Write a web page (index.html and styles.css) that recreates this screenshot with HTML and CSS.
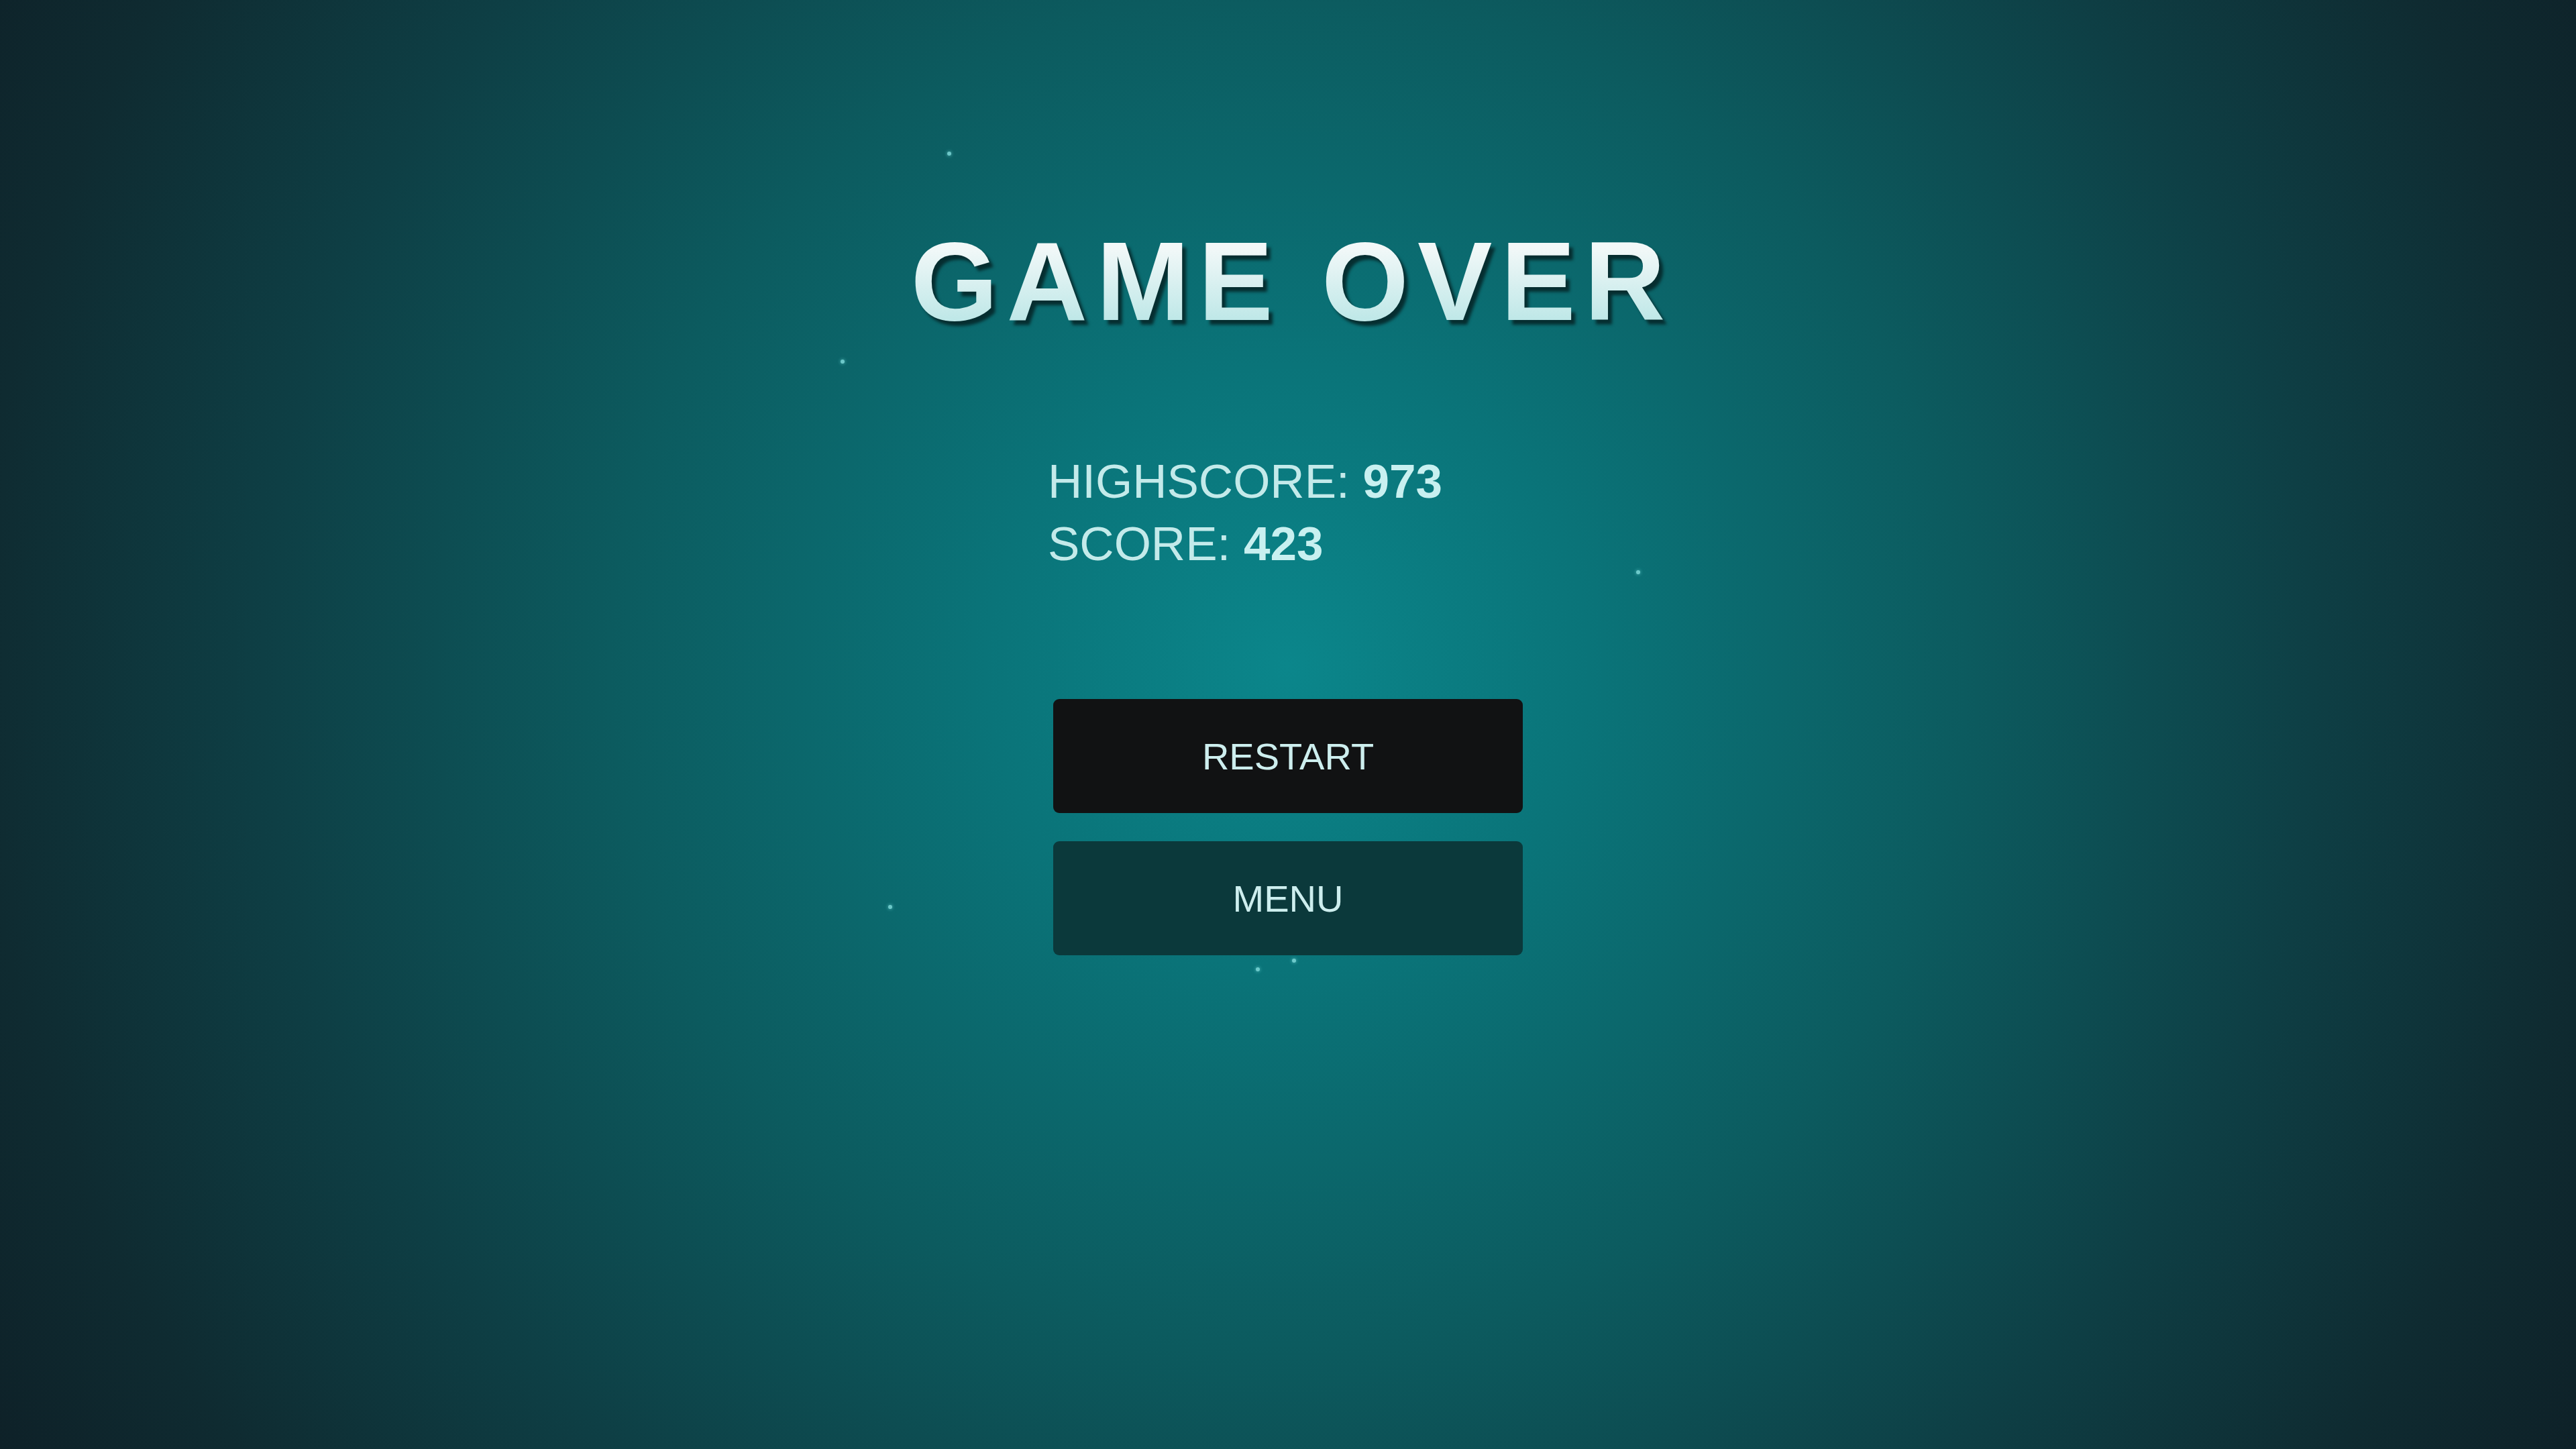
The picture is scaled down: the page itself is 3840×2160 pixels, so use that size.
FILE: index.html
```html
<!DOCTYPE html>
<html lang="en">
<head>
    <meta charset="UTF-8">
    <meta name="viewport" content="width=device-width, initial-scale=1.0">
    <title>Game Over</title>
    <link rel="stylesheet" href="styles.css">
</head>
<body>
    <main class="game-over">
        <div class="particles">
            <span class="speck" style="left: 1412px; top: 226px;"></span>
            <span class="speck" style="left: 1253px; top: 536px;"></span>
            <span class="speck" style="left: 2439px; top: 850px;"></span>
            <span class="speck" style="left: 1324px; top: 1349px;"></span>
            <span class="speck" style="left: 1872px; top: 1442px;"></span>
            <span class="speck" style="left: 1926px; top: 1429px;"></span>
        </div>

        <h1 class="title">GAME OVER</h1>

        <div class="panel">
            <div class="scores">
                <p>HIGHSCORE: <strong>973</strong></p>
                <p>SCORE: <strong>423</strong></p>
            </div>

            <div class="actions">
                <button class="btn btn-restart">RESTART</button>
                <button class="btn btn-menu">MENU</button>
            </div>
        </div>
    </main>
</body>
</html>
```

FILE: styles.css
```css
:root {
    --text-color: #c3eaea;
    --restart-bg: #111213;
    --menu-bg: #0b393b;
}

html, body {
    margin: 0;
    height: 100%;
}

body {
    font-family: "Liberation Sans", Arial, sans-serif;
    overflow: hidden;
    background: radial-gradient(circle at 50% 46%,
        #0b868b 0%,
        #0a7479 20%,
        #0c5b5f 45%,
        #0e3f45 68%,
        #0f2b31 87%,
        #0e2128 100%);
}

.game-over {
    position: relative;
    height: 100vh;
    display: flex;
    flex-direction: column;
    align-items: center;
}

.particles {
    position: absolute;
    inset: 0;
    pointer-events: none;
}

.speck {
    position: absolute;
    width: 6px;
    height: 6px;
    border-radius: 50%;
    background: #7fdada;
    box-shadow: 0 0 4px 1px rgba(110, 215, 215, 0.5);
    opacity: 0.85;
}

.title {
    margin: 336px 0 0;
    padding-left: 13px;
    font-size: 167px;
    line-height: 1;
    font-weight: bold;
    letter-spacing: 13px;
    background: linear-gradient(to bottom, #f2f8f8 20%, #b6e5e5 95%);
    -webkit-background-clip: text;
    background-clip: text;
    color: transparent;
    filter: drop-shadow(6px 7px 2px rgba(5, 42, 44, 0.95));
}

.panel {
    width: 700px;
    margin-top: 168px;
    display: flex;
    flex-direction: column;
}

.scores {
    margin-left: -8px;
}

.scores p {
    margin: 0;
    font-size: 71px;
    line-height: 93px;
    color: var(--text-color);
}

.scores strong {
    color: #c8f0f0;
}

.actions {
    margin-top: 185px;
    display: flex;
    flex-direction: column;
    gap: 42px;
}

.btn {
    height: 170px;
    border: none;
    border-radius: 9px;
    font-family: inherit;
    font-size: 56px;
    color: #cdeeee;
    cursor: pointer;
}

.btn-restart {
    background-color: var(--restart-bg);
}

.btn-menu {
    background-color: var(--menu-bg);
}
```
